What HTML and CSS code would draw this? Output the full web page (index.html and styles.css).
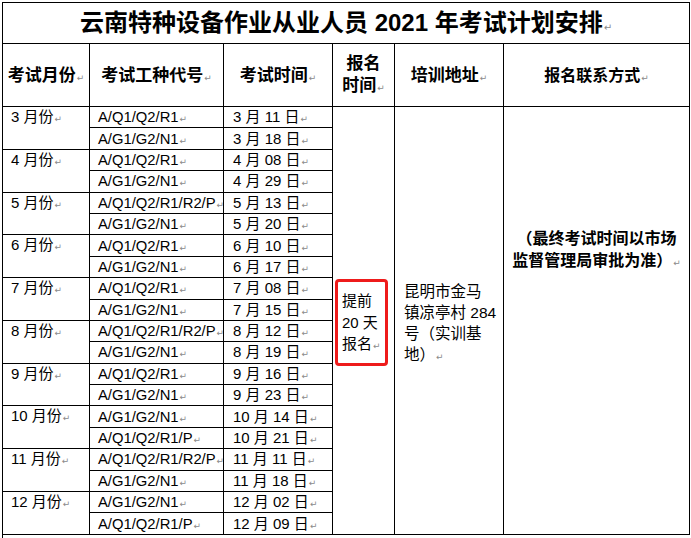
FILE: index.html
```html
<!DOCTYPE html>
<html lang="zh-CN">
<head>
<meta charset="utf-8">
<title>云南特种设备作业从业人员 2021 年考试计划安排</title>
<link rel="stylesheet" href="styles.css">
</head>
<body>
<table class="plan">
  <colgroup>
    <col class="c1"><col class="c2"><col class="c3"><col class="c4"><col class="c5"><col class="c6">
  </colgroup>
  <tr class="title">
    <td colspan="6">云南特种设备作业从业人员 2021 年考试计划安排<span class="pm">↵</span></td>
  </tr>
  <tr class="head">
    <th>考试月份<span class="pm">↵</span></th>
    <th>考试工种代号<span class="pm">↵</span></th>
    <th>考试时间<span class="pm">↵</span></th>
    <th class="two">报名<br>时间<span class="pm">↵</span></th>
    <th>培训地址<span class="pm">↵</span></th>
    <th class="small">报名联系方式<span class="pm">↵</span></th>
  </tr>
  <tr>
    <td class="month" rowspan="2">3 月份<span class="pm">↵</span></td>
    <td class="code">A/Q1/Q2/R1<span class="pm">↵</span></td>
    <td class="date">3 月 11 日<span class="pm">↵</span></td>
    <td class="signup" rowspan="20"><div class="mark">提前<br>20 天<br>报名<span class="pm">↵</span></div></td>
    <td class="addr" rowspan="20">昆明市金马<br>镇凉亭村 284<br>号（实训基<br>地）<span class="pm">↵</span></td>
    <td class="contact" rowspan="20">（最终考试时间以市场<br>监督管理局审批为准）<span class="pm">↵</span></td>
  </tr>
  <tr><td class="code">A/G1/G2/N1<span class="pm">↵</span></td><td class="date">3 月 18 日<span class="pm">↵</span></td></tr>
  <tr><td class="month" rowspan="2">4 月份<span class="pm">↵</span></td><td class="code">A/Q1/Q2/R1<span class="pm">↵</span></td><td class="date">4 月 08 日<span class="pm">↵</span></td></tr>
  <tr><td class="code">A/G1/G2/N1<span class="pm">↵</span></td><td class="date">4 月 29 日<span class="pm">↵</span></td></tr>
  <tr><td class="month" rowspan="2">5 月份<span class="pm">↵</span></td><td class="code">A/Q1/Q2/R1/R2/P<span class="pm">↵</span></td><td class="date">5 月 13 日<span class="pm">↵</span></td></tr>
  <tr><td class="code">A/G1/G2/N1<span class="pm">↵</span></td><td class="date">5 月 20 日<span class="pm">↵</span></td></tr>
  <tr><td class="month" rowspan="2">6 月份<span class="pm">↵</span></td><td class="code">A/Q1/Q2/R1<span class="pm">↵</span></td><td class="date">6 月 10 日<span class="pm">↵</span></td></tr>
  <tr><td class="code">A/G1/G2/N1<span class="pm">↵</span></td><td class="date">6 月 17 日<span class="pm">↵</span></td></tr>
  <tr><td class="month" rowspan="2">7 月份<span class="pm">↵</span></td><td class="code">A/Q1/Q2/R1<span class="pm">↵</span></td><td class="date">7 月 08 日<span class="pm">↵</span></td></tr>
  <tr><td class="code">A/G1/G2/N1<span class="pm">↵</span></td><td class="date">7 月 15 日<span class="pm">↵</span></td></tr>
  <tr><td class="month" rowspan="2">8 月份<span class="pm">↵</span></td><td class="code">A/Q1/Q2/R1/R2/P<span class="pm">↵</span></td><td class="date">8 月 12 日<span class="pm">↵</span></td></tr>
  <tr><td class="code">A/G1/G2/N1<span class="pm">↵</span></td><td class="date">8 月 19 日<span class="pm">↵</span></td></tr>
  <tr><td class="month" rowspan="2">9 月份<span class="pm">↵</span></td><td class="code">A/Q1/Q2/R1<span class="pm">↵</span></td><td class="date">9 月 16 日<span class="pm">↵</span></td></tr>
  <tr><td class="code">A/G1/G2/N1<span class="pm">↵</span></td><td class="date">9 月 23 日<span class="pm">↵</span></td></tr>
  <tr><td class="month" rowspan="2">10 月份<span class="pm">↵</span></td><td class="code">A/G1/G2/N1<span class="pm">↵</span></td><td class="date">10 月 14 日<span class="pm">↵</span></td></tr>
  <tr><td class="code">A/Q1/Q2/R1/P<span class="pm">↵</span></td><td class="date">10 月 21 日<span class="pm">↵</span></td></tr>
  <tr><td class="month" rowspan="2">11 月份<span class="pm">↵</span></td><td class="code">A/Q1/Q2/R1/R2/P<span class="pm">↵</span></td><td class="date">11 月 11 日<span class="pm">↵</span></td></tr>
  <tr><td class="code">A/G1/G2/N1<span class="pm">↵</span></td><td class="date">11 月 18 日<span class="pm">↵</span></td></tr>
  <tr><td class="month" rowspan="2">12 月份<span class="pm">↵</span></td><td class="code">A/G1/G2/N1<span class="pm">↵</span></td><td class="date">12 月 02 日<span class="pm">↵</span></td></tr>
  <tr><td class="code">A/Q1/Q2/R1/P<span class="pm">↵</span></td><td class="date">12 月 09 日<span class="pm">↵</span></td></tr>
</table>
<div class="next"></div>
</body>
</html>
```
FILE: styles.css
```css
html, body {
  margin: 0;
  padding: 0;
  background: #fff;
}
body {
  font-family: "Liberation Sans", "Noto Sans CJK SC", sans-serif;
  color: #000;
  width: 691px;
  height: 538px;
  overflow: hidden;
}
.plan {
  border-collapse: collapse;
  table-layout: fixed;
  width: 687px;
  margin: 2px 0 0 2px;
}
.c1 { width: 87px; }
.c2 { width: 134px; }
.c3 { width: 109px; }
.c4 { width: 62px; }
.c5 { width: 109px; }
.c6 { width: 186px; }
.plan td, .plan th {
  border: 1px solid #000;
  padding: 0;
  white-space: nowrap;
  overflow: hidden;
}
.title td {
  height: 40px;
  text-align: center;
  font-weight: bold;
  font-size: 24px;
  line-height: 28px;
  vertical-align: middle;
}
.head th {
  height: 62px;
  font-size: 17px;
  font-weight: bold;
  text-align: center;
  vertical-align: middle;
  line-height: 21px;
}
.head th.small { font-size: 16px; }
.head th.two { line-height: 22px; }
.plan tr:not(.title):not(.head) { height: 21.4px; }
.month, .code, .date {
  font-size: 15px;
  line-height: 18px;
  vertical-align: middle;
  padding-left: 8px !important;
  text-align: left;
}
.code { font-size: 14.8px; }
.month { vertical-align: top; padding-top: 1px !important; }
.date { padding-left: 9px !important; }
.signup {
  vertical-align: middle;
  padding-left: 2px !important;
  padding-top: 4px !important;
}
.mark {
  display: inline-block;
  box-sizing: border-box;
  width: 53px;
  border: 3px solid #ee1b1b;
  border-radius: 4px;
  padding: 8px 0 8px 4px;
  font-size: 15px;
  line-height: 21.7px;
  text-align: left;
}
.addr {
  vertical-align: middle;
  padding: 6px 0 0 9px !important;
  font-size: 15.5px;
  line-height: 21px;
  text-align: left;
}
.contact {
  vertical-align: top;
  padding-top: 121px !important;
  text-align: center;
  font-weight: bold;
  font-size: 16px;
  line-height: 22px;
}
.pm {
  font-family: "DejaVu Sans", sans-serif;
  font-weight: normal;
  font-size: 9px;
  line-height: 1;
  color: #8a8a8a;
  margin-left: 1px;
}
.title .pm { font-size: 10px; }
.next {
  margin-left: 2px;
  height: 10px;
  border-left: 1px solid #000;
}
```
